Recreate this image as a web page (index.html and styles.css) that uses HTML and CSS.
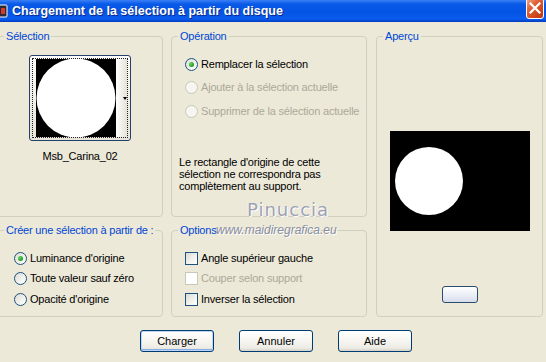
FILE: index.html
```html
<!DOCTYPE html>
<html lang="fr">
<head>
<meta charset="utf-8">
<title>Chargement de la sélection à partir du disque</title>
<link rel="stylesheet" href="styles.css">
</head>
<body>
<div class="window">
  <div class="titlebar">
    <span class="ticon">
      <svg width="16" height="16" viewBox="0 0 16 16"><rect x="1" y="2" width="14" height="12" rx="1" fill="#2a2a3a" stroke="#fff" stroke-width="1"/><rect x="9" y="5" width="4" height="6" fill="#d83a2a"/><rect x="3" y="4" width="4" height="3" fill="#8fb8ff"/></svg>
    </span>
    <span class="title">Chargement de la sélection à partir du disque</span>
    <span class="close">
      <svg width="18" height="21" viewBox="0 0 18 21"><path d="M4.5 5.5 L13.5 14.5 M13.5 5.5 L4.5 14.5" stroke="#fff" stroke-width="2.2" stroke-linecap="square"/></svg>
    </span>
  </div>

  <div class="content">
    <fieldset class="group g-sel">
      <legend>Sélection</legend>
      <div class="thumb">
        <div class="focus">
          <svg class="thumb-img" width="80" height="78" viewBox="0 0 80 78"><rect width="80" height="78" fill="#000"/><circle cx="40" cy="39" r="39.5" fill="#fff"/></svg>
          <div class="strip"><span class="arrow"></span></div>
        </div>
      </div>
      <div class="thumb-name">Msb_Carina_02</div>
    </fieldset>

    <fieldset class="group g-op">
      <legend>Opération</legend>
      <div class="options op-list">
        <div class="opt"><span class="radio on"></span><span>Remplacer la sélection</span></div>
        <div class="opt disabled"><span class="radio"></span><span>Ajouter à la sélection actuelle</span></div>
        <div class="opt disabled"><span class="radio"></span><span>Supprimer de la sélection actuelle</span></div>
      </div>
      <p class="note">Le rectangle d'origine de cette<br>sélection ne correspondra pas<br>complètement au support.</p>
    </fieldset>

    <fieldset class="group g-prev">
      <legend>Aperçu</legend>
      <svg class="preview" width="140" height="100" viewBox="0 0 140 100"><rect width="140" height="100" fill="#000"/><circle cx="39" cy="50" r="34" fill="#fff"/></svg>
      <span class="mini-btn"></span>
    </fieldset>

    <fieldset class="group g-create">
      <legend>Créer une sélection à partir de :</legend>
      <div class="options low-list">
        <div class="opt"><span class="radio on"></span><span>Luminance d'origine</span></div>
        <div class="opt"><span class="radio"></span><span>Toute valeur sauf zéro</span></div>
        <div class="opt"><span class="radio"></span><span>Opacité d'origine</span></div>
      </div>
    </fieldset>

    <fieldset class="group g-opt">
      <legend>Options</legend>
      <div class="options low-list">
        <div class="opt"><span class="check"></span><span>Angle supérieur gauche</span></div>
        <div class="opt disabled"><span class="check"></span><span>Couper selon support</span></div>
        <div class="opt"><span class="check"></span><span>Inverser la sélection</span></div>
      </div>
    </fieldset>
  </div>

  <div class="buttons">
    <span class="btn default">Charger</span>
    <span class="btn">Annuler</span>
    <span class="btn">Aide</span>
  </div>

  <div class="wm-name">Pinuccia</div>
  <div class="wm-url">www.maidiregrafica.eu</div>
</div>
</body>
</html>
```

FILE: styles.css
```css
* { box-sizing: border-box; }
html, body { margin: 0; padding: 0; }
body {
  width: 546px;
  height: 362px;
  overflow: hidden;
  background: #ece9d8;
  font-family: "Liberation Sans", Arial, sans-serif;
  font-size: 11px;
  letter-spacing: -0.2px;
  color: #000;
}
.window { position: relative; width: 546px; height: 362px; }

.titlebar {
  height: 22px;
  display: flex;
  align-items: center;
  overflow: hidden;
  background: linear-gradient(#3a80f6 0%, #0a5ae8 18%, #0453e3 55%, #0a5cef 85%, #0549d6 95%, #0038b8 100%);
  color: #fff;
}
.ticon { display: flex; margin-left: -8px; width: 16px; height: 16px; }
.title {
  margin-left: 4px;
  font-weight: bold;
  font-size: 12.5px;
  letter-spacing: 0;
  text-shadow: 1px 1px 0 #0a2a8a;
  flex: 1;
}
.close {
  align-self: flex-start;
  margin-top: -2px;
  margin-right: 2px;
  width: 18px;
  height: 21px;
  border: 1px solid #fff;
  border-radius: 3px;
  background: linear-gradient(135deg, #f0a888 0%, #e0633a 35%, #cc4418 75%, #c23a14 100%);
  display: flex;
}
.close svg { display: block; margin: -1px; }

.content {
  display: grid;
  grid-template-columns: 166px 196px 168px;
  grid-template-rows: 187px 93px;
  column-gap: 8px;
  row-gap: 7px;
  margin-left: -3px;
  padding-top: 8px;
}
.group {
  margin: 0;
  padding: 0;
  min-width: 0;
  border: 1px solid #d0d0bf;
  border-radius: 4px;
}
.group legend {
  margin-left: 6px;
  padding: 0 2px;
  color: #0046d5;
  line-height: 13px;
  font-size: 11px;
}
.g-sel { grid-column: 1; grid-row: 1; display: flex; flex-direction: column; align-items: center; }
.g-op { grid-column: 2; grid-row: 1; }
.g-prev { grid-column: 3; grid-row: 1 / span 2; margin-left: 1px; display: flex; flex-direction: column; align-items: center; }
.g-create { grid-column: 1; grid-row: 2; }
.g-opt { grid-column: 2; grid-row: 2; }

.thumb {
  margin-top: 12px;
  width: 102px;
  height: 86px;
  border: 1px solid #24416c;
  border-radius: 3px;
  background: linear-gradient(#fbfbf9, #e6e4da);
  padding: 2px;
}
.focus {
  height: 100%;
  border: 1px dotted #222;
  display: flex;
  align-items: center;
  padding-left: 3px;
}
.thumb-img { display: block; }
.strip {
  width: 11px;
  height: 78px;
  background: linear-gradient(90deg, #ffffff, #e4e2d8);
  display: flex;
  align-items: center;
  justify-content: flex-end;
}
.arrow {
  width: 0; height: 0;
  border-left: 2.5px solid transparent;
  border-right: 2.5px solid transparent;
  border-top: 3px solid #000;
}
.thumb-name { margin-top: 9px; line-height: 13px; }

.options { display: flex; flex-direction: column; }
.opt { display: flex; align-items: center; gap: 3px; height: 13px; line-height: 13px; white-space: nowrap; }
.opt.disabled { color: #aca899; }
.op-list { margin-top: 14.5px; padding-left: 13px; gap: 10.5px; }
.low-list { margin-top: 14.5px; gap: 7.5px; }
.g-create .low-list { padding-left: 16px; }
.g-opt .low-list { padding-left: 13px; }

.radio {
  flex: none;
  width: 13px; height: 13px;
  border-radius: 50%;
  border: 1px solid #1c5180;
  background: linear-gradient(135deg, #dcdcd5 0%, #f3f3ef 60%, #ffffff 100%);
  display: flex; align-items: center; justify-content: center;
}
.radio.on::after {
  content: "";
  width: 5px; height: 5px;
  border-radius: 50%;
  background: radial-gradient(circle at 35% 35%, #5fd85f, #1f9a1f 70%);
}
.disabled .radio { border-color: #cac8bb; background: #f6f5f0; }
.check {
  flex: none;
  width: 13px; height: 13px;
  border: 1px solid #1c5180;
  background: linear-gradient(135deg, #dcdcd5 0%, #f3f3ef 60%, #ffffff 100%);
}
.disabled .check { border-color: #cac8bb; background: #fff; }

.note {
  margin: 38.5px 0 0 7px;
  line-height: 12px;
}

.preview { display: block; margin-top: 88px; }
.mini-btn {
  display: block;
  margin-top: 55px;
  width: 36px;
  height: 17px;
  border: 1px solid #2b4b6f;
  border-radius: 3px;
  background: linear-gradient(#ffffff, #e8ecf4 60%, #d6dcea);
}

.buttons {
  display: flex;
  gap: 25px;
  padding-left: 140px;
  margin-top: 13px;
}
.btn {
  width: 74px;
  height: 22px;
  border: 1px solid #003c74;
  border-radius: 3px;
  background: linear-gradient(#ffffff 0%, #f6f5f0 50%, #ecebe4 85%, #d6d0c5 100%);
  display: flex;
  align-items: center;
  justify-content: center;
  letter-spacing: 0;
}
.btn.default {
  box-shadow: inset 0 0 0 1px #bcd4f6, inset 0 -1px 0 1px #89ade4;
}

.wm-name {
  position: absolute;
  left: 247px;
  top: 199px;
  font-family: "DejaVu Sans", sans-serif;
  font-size: 18px;
  letter-spacing: 1px;
  line-height: 22px;
  color: #9ea2b2;
  text-shadow: 1px 1px 0 #fff, -1px 0 0 #f4f4f4;
}
.wm-url {
  position: absolute;
  left: 216px;
  top: 223px;
  font-style: italic;
  font-size: 12px;
  letter-spacing: 0;
  line-height: 14px;
  color: #8a8ea0;
  text-shadow: 1px 1px 0 #fff;
}
```
